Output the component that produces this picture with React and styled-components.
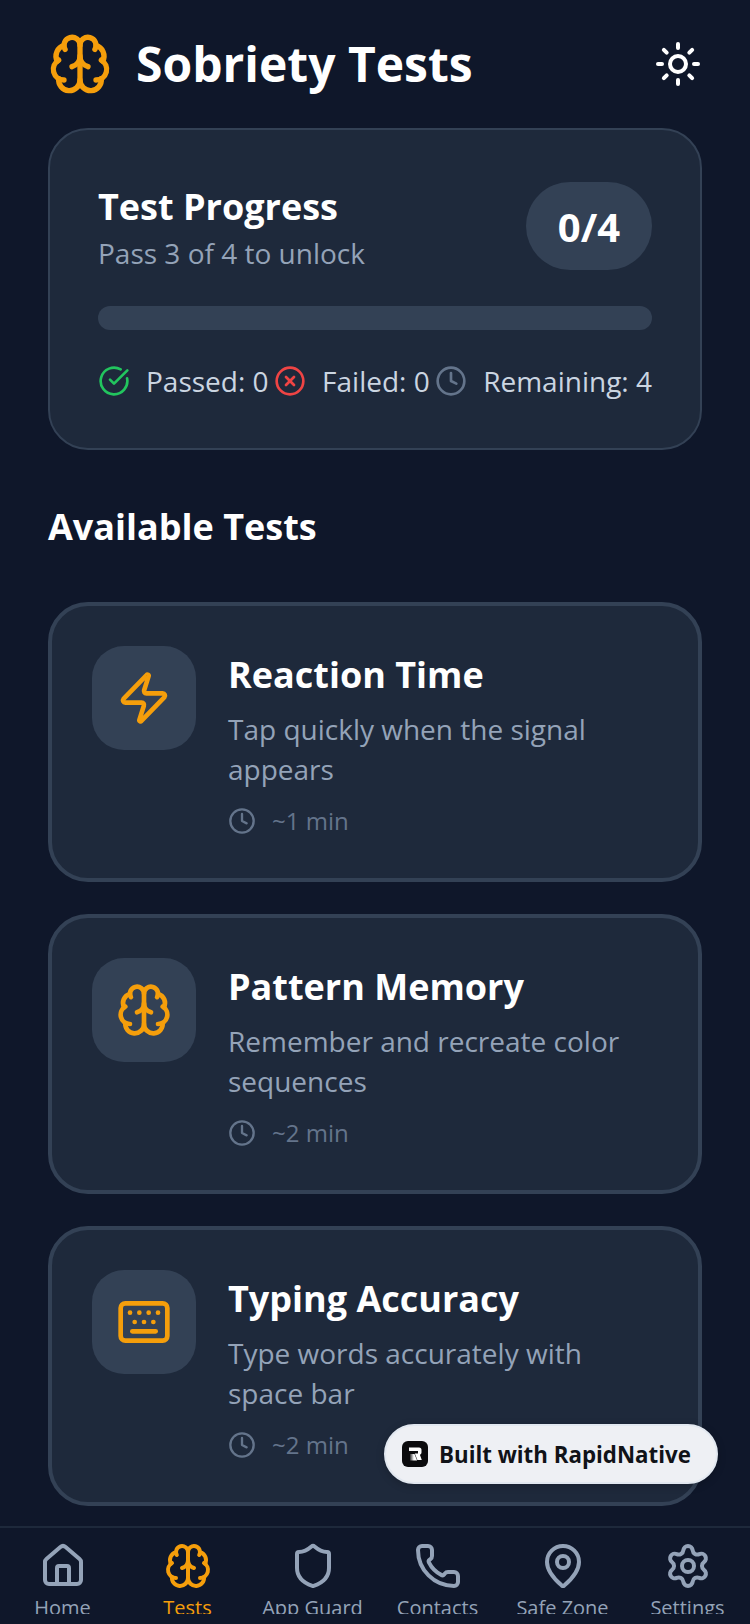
import styled, { createGlobalStyle } from "styled-components";
import {
  Brain,
  Sun,
  CircleCheckBig,
  CircleX,
  Clock,
  Zap,
  Keyboard,
  House,
  Shield,
  Phone,
  MapPin,
  Settings,
} from "lucide-react";

const Global = createGlobalStyle`
  * { box-sizing: border-box; }
  html, body { margin: 0; padding: 0; background: #0f172a; }
  body { font-family: "Open Sans", "Noto Sans", sans-serif; }
`;

const Screen = styled.div`
  position: relative;
  width: 750px;
  height: 1624px;
  overflow: hidden;
  display: flex;
  flex-direction: column;
  background: #0f172a;
`;

const Content = styled.main`
  flex: 1;
  min-height: 0;
  overflow: hidden;
  padding: 0 48px;
`;

const Header = styled.header`
  display: flex;
  align-items: center;
  justify-content: space-between;
  height: 128px;
`;

const HeaderLeft = styled.div`
  display: flex;
  align-items: center;
  gap: 24px;
`;

const Title = styled.h1`
  margin: 0;
  font-size: 48px;
  line-height: 64px;
  font-weight: 700;
  color: #ffffff;
`;

const ProgressCard = styled.section`
  background: #1e293b;
  border: 2px solid #334155;
  border-radius: 40px;
  padding: 52px 48px 48px;
  height: 322px;
`;

const ProgressTop = styled.div`
  display: flex;
  align-items: flex-start;
  justify-content: space-between;
  height: 88px;
`;

const ProgressTitle = styled.div`
  font-size: 36px;
  line-height: 50px;
  font-weight: 700;
  color: #ffffff;
`;

const ProgressSub = styled.div`
  margin-top: 1px;
  font-size: 28px;
  line-height: 40px;
  color: #94a3b8;
`;

const Count = styled.div`
  width: 126px;
  height: 88px;
  border-radius: 44px;
  background: #334155;
  display: flex;
  align-items: center;
  justify-content: center;
  font-size: 40px;
  font-weight: 700;
  color: #ffffff;
`;

const Track = styled.div`
  height: 24px;
  border-radius: 12px;
  background: #334155;
  margin: 36px 0 31px;
`;

const Stats = styled.div`
  display: flex;
  align-items: center;
  justify-content: space-between;
`;

const Stat = styled.div`
  display: flex;
  align-items: center;
  gap: 16px;
  font-size: 28px;
  line-height: 40px;
  color: #cbd5e1;
`;

const SectionTitle = styled.h2`
  margin: 53px 0 51px;
  font-size: 36px;
  line-height: 48px;
  font-weight: 700;
  color: #ffffff;
`;

const TestList = styled.div`
  display: flex;
  flex-direction: column;
  gap: 32px;
`;

const TestCard = styled.article`
  display: flex;
  gap: 32px;
  background: #1e293b;
  border: 4px solid #334155;
  border-radius: 40px;
  padding: 40px;
  height: 280px;
`;

const IconBox = styled.div`
  flex: none;
  width: 104px;
  height: 104px;
  border-radius: 32px;
  background: #334155;
  display: flex;
  align-items: center;
  justify-content: center;
`;

const TestBody = styled.div`
  flex: 1;
  min-width: 0;
  padding-top: 1px;
`;

const TestName = styled.div`
  font-size: 36px;
  line-height: 56px;
  font-weight: 700;
  color: #ffffff;
`;

const TestDesc = styled.div`
  margin-top: 6px;
  font-size: 28px;
  line-height: 40px;
  color: #94a3b8;
`;

const TestTime = styled.div`
  display: flex;
  align-items: center;
  gap: 16px;
  margin-top: 16px;
  font-size: 24px;
  line-height: 32px;
  color: #64748b;
`;

const Nav = styled.nav`
  flex: none;
  height: 88px;
  overflow: hidden;
  display: flex;
  background: #0f172a;
  border-top: 2px solid #1e293b;
`;

const NavItem = styled.div`
  flex: 1;
  display: flex;
  flex-direction: column;
  align-items: center;
  gap: 4px;
  padding-top: 14px;
  font-size: 20px;
  line-height: 28px;
  white-space: nowrap;
  color: ${(p) => (p.$active ? "#f59e0b" : "#94a3b8")};

  svg {
    flex: none;
  }
`;

const NavBar = styled.div`
  flex: none;
  height: 10px;
  background: #0f172a;
`;

const BuiltBadge = styled.div`
  position: absolute;
  left: 384px;
  top: 1424px;
  width: 334px;
  height: 60px;
  border-radius: 30px;
  border: 2px solid #e2e8f0;
  background: #eef0f4;
  display: flex;
  align-items: center;
  gap: 11px;
  padding-left: 16px;
  font-size: 22.3px;
  font-weight: 700;
  color: #111318;
  box-shadow: 0 2px 8px rgba(0, 0, 0, 0.2);
`;

const tests = [
  { name: "Reaction Time", desc: "Tap quickly when the signal appears", time: "~1 min", Icon: Zap },
  { name: "Pattern Memory", desc: "Remember and recreate color sequences", time: "~2 min", Icon: Brain },
  { name: "Typing Accuracy", desc: "Type words accurately with space bar", time: "~2 min", Icon: Keyboard },
];

const tabs = [
  { label: "Home", Icon: House },
  { label: "Tests", Icon: Brain, active: true },
  { label: "App Guard", Icon: Shield },
  { label: "Contacts", Icon: Phone },
  { label: "Safe Zone", Icon: MapPin },
  { label: "Settings", Icon: Settings },
];

function RapidLogo() {
  return (
    <svg width="26" height="26" viewBox="0 0 26 26">
      <defs>
        <linearGradient id="rapidFade" x1="0" x2="1" y1="0" y2="0">
          <stop offset="0" stopColor="#ffffff" stopOpacity="0.15" />
          <stop offset="0.55" stopColor="#ffffff" />
        </linearGradient>
      </defs>
      <rect width="26" height="26" rx="6" fill="#0b0b0d" />
      <path
        d="M7 6.5h10a2.5 2.5 0 0 1 2.5 2.5v2.5a2.5 2.5 0 0 1-1.6 2.3l1.9 5.2h-4.4l-2.6-6.4h3.2v-2.6H7z"
        fill="#ffffff"
      />
      <path d="M8 13h4.5l2.6 6.5H8z" fill="url(#rapidFade)" />
    </svg>
  );
}

export default function App() {
  return (
    <Screen>
      <Global />
      <Content>
        <Header>
          <HeaderLeft>
            <Brain size={64} color="#f59e0b" strokeWidth={2} />
            <Title>Sobriety Tests</Title>
          </HeaderLeft>
          <Sun size={48} color="#ffffff" strokeWidth={2} />
        </Header>

        <ProgressCard>
          <ProgressTop>
            <div>
              <ProgressTitle>Test Progress</ProgressTitle>
              <ProgressSub>Pass 3 of 4 to unlock</ProgressSub>
            </div>
            <Count>0/4</Count>
          </ProgressTop>
          <Track />
          <Stats>
            <Stat>
              <CircleCheckBig size={32} color="#22c55e" />
              Passed: 0
            </Stat>
            <Stat>
              <CircleX size={32} color="#ef4444" />
              Failed: 0
            </Stat>
            <Stat>
              <Clock size={32} color="#64748b" />
              Remaining: 4
            </Stat>
          </Stats>
        </ProgressCard>

        <SectionTitle>Available Tests</SectionTitle>

        <TestList>
          {tests.map(({ name, desc, time, Icon }) => (
            <TestCard key={name}>
              <IconBox>
                <Icon size={56} color="#f59e0b" strokeWidth={2} />
              </IconBox>
              <TestBody>
                <TestName>{name}</TestName>
                <TestDesc>{desc}</TestDesc>
                <TestTime>
                  <Clock size={28} color="#64748b" />
                  {time}
                </TestTime>
              </TestBody>
            </TestCard>
          ))}
        </TestList>
      </Content>

      <Nav>
        {tabs.map(({ label, Icon, active }) => (
          <NavItem key={label} $active={active}>
            <Icon size={48} color={active ? "#f59e0b" : "#94a3b8"} strokeWidth={2} />
            {label}
          </NavItem>
        ))}
      </Nav>
      <NavBar />

      <BuiltBadge>
        <RapidLogo />
        Built with RapidNative
      </BuiltBadge>
    </Screen>
  );
}
